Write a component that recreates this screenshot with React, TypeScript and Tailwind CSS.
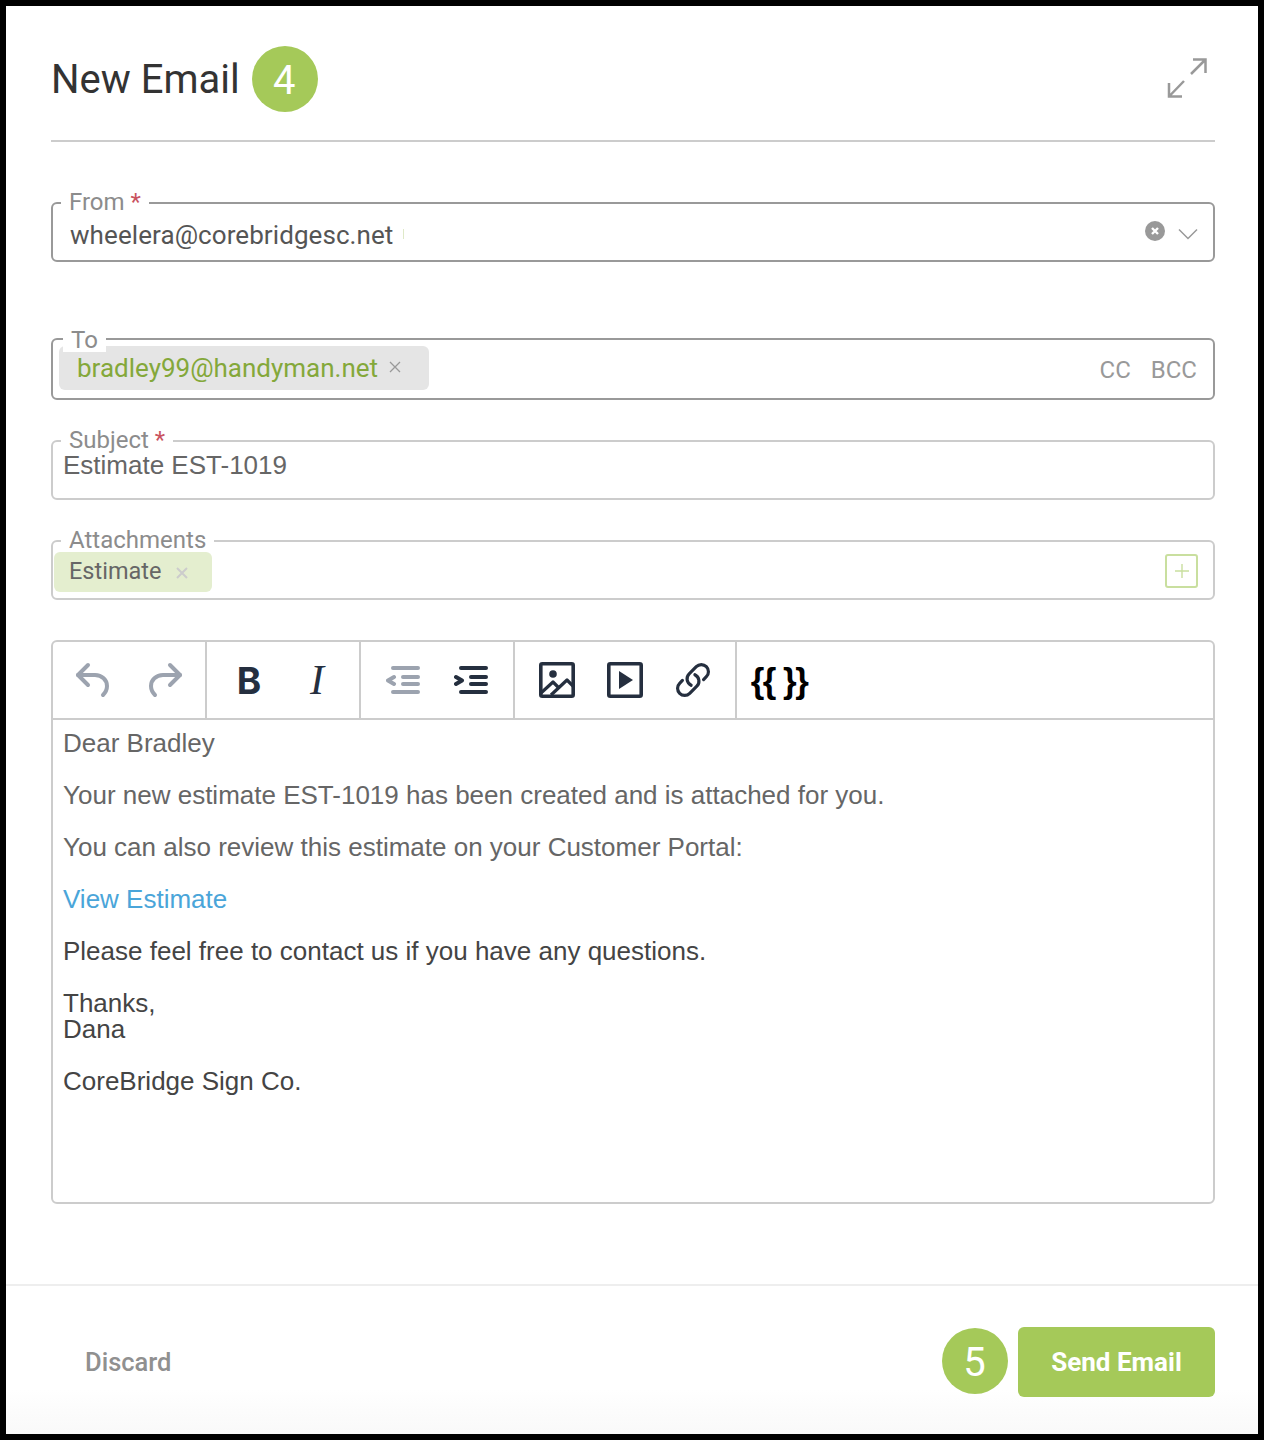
import React from "react";

const roboto = "font-['Roboto',sans-serif]";
const arial = "font-['Liberation_Sans',Arial,sans-serif]";

function Badge({ n }: { n: string }) {
  return (
    <span className={`flex h-[66px] w-[66px] shrink-0 items-center justify-center rounded-full bg-[#a5c959] pr-px pt-[3px] text-[40px] leading-none text-white ${roboto}`}>
      {n}
    </span>
  );
}

function Req() {
  return <span className="ml-[6px] text-[#c9535f]">*</span>;
}

function FieldLabel({ children, className = "" }: { children: React.ReactNode; className?: string }) {
  return (
    <span className={`absolute z-10 bg-white text-[24px] leading-[24px] text-[#8c8c8c] ${roboto} ${className}`}>
      {children}
    </span>
  );
}

function Undo({ flip = false, color }: { flip?: boolean; color: string }) {
  return (
    <svg width="36" height="36" viewBox="0 0 36 36" fill="none" stroke={color} strokeWidth="4" strokeLinecap="round" strokeLinejoin="round" className={flip ? "-scale-x-100" : ""}>
      <path d="M13 3 3 13l10 10" />
      <path d="M3 13h17c7 0 12 5 12 11 0 3-1 6-4 9" />
    </svg>
  );
}

function Outdent({ color, flip = false }: { color: string; flip?: boolean }) {
  return (
    <svg width="34" height="30" viewBox="0 0 34 30" fill="none" stroke={color} strokeWidth="4" strokeLinecap="round" strokeLinejoin="round">
      <path d="M7 3h25M17 12h15M17 19h15M7 27h25" />
      {flip ? <path d="M2 12l6 3.500-6 3.500" /> : <path d="M8 12l-6 3.500 6 3.500" />}
    </svg>
  );
}

function Btn({ children }: { children: React.ReactNode }) {
  return <span className="flex h-full w-[68px] items-center justify-center">{children}</span>;
}

function Group({ children, last = false }: { children: React.ReactNode; last?: boolean }) {
  return <div className={`flex h-full px-2 ${last ? "" : "border-r-2 border-[#cccccc]"}`}>{children}</div>;
}

export default function App() {
  return (
    <div className="box-border flex h-[1440px] w-[1264px] flex-col border-[6px] border-black bg-white">
      <div className="flex flex-1 flex-col pl-[45px] pr-[43px]">
        <header className="flex items-center justify-between border-b-2 border-[#cccccc] pb-[28px] pt-[40px]">
          <div className="flex items-center gap-[12px]">
            <h1 className={`pt-[2px] text-[40px] font-normal leading-none text-[#333333] ${roboto}`}>New Email</h1>
            <Badge n="4" />
          </div>
          <svg width="42" height="42" viewBox="0 0 42 42" fill="none" stroke="#999999" strokeWidth="2.500" className="mr-[7px]">
            <path d="M25 16 39.500 1.500M27 1.500h12.500V15" />
            <path d="M18 23 3 38.500M3 25v13.500h13" />
          </svg>
        </header>

        <div className="relative mt-[60px] flex h-[60px] items-center rounded-[6px] border-2 border-[#999999] pl-[17px] pr-[15px]">
          <FieldLabel className="left-[8px] top-[-14px] px-[8px]">From<Req /></FieldLabel>
          <span className={`mt-[5px] text-[26px] leading-[30px] tracking-[0.08px] text-[#555555] ${roboto}`}>wheelera@corebridgesc.net</span>
          <span className="ml-[10px] mt-[4px] h-[10px] w-px bg-[#dfe9c8]" />
          <svg width="20" height="20" viewBox="0 0 20 20" className="ml-auto mt-[-2px]">
            <circle cx="10" cy="10" r="10" fill="#999999" />
            <path d="M7 7l6 6M13 7l-6 6" stroke="#fff" strokeWidth="2.400" />
          </svg>
          <svg width="20" height="12" viewBox="0 0 20 12" fill="none" stroke="#999999" strokeWidth="1.500" className="ml-[13px] mt-[4px]">
            <path d="M1 1.500l9 9 9-9" />
          </svg>
        </div>

        <div className="relative mt-[76px] flex h-[62px] items-start rounded-[6px] border-2 border-[#999999] pl-[6px] pr-[16px] pt-[6px]">
          <FieldLabel className="left-[10px] top-[-12px] px-[8px]">To</FieldLabel>
          <span className="flex h-[44px] w-[370px] items-center rounded-[6px] bg-[#e5e5e5] pl-[18px]">
            <span className={`text-[26px] leading-[30px] text-[#84a83a] ${roboto}`}>bradley99@handyman.net</span>
            <svg width="12" height="12" viewBox="0 0 12 12" stroke="#999999" strokeWidth="1.300" className="ml-[11px] mt-[-2px]">
              <path d="M1 1l10 10M11 1 1 11" />
            </svg>
          </span>
          <div className={`ml-auto mt-[9px] flex gap-[20px] text-[24px] leading-[30px] text-[#999999] ${roboto}`}>
            <span>CC</span>
            <span>BCC</span>
          </div>
        </div>

        <div className="relative mt-[40px] h-[60px] rounded-[6px] border-2 border-[#cccccc] pl-[10px] pt-[10px]">
          <FieldLabel className="left-[8px] top-[-14px] px-[8px]">Subject<Req /></FieldLabel>
          <span className={`block text-[26px] leading-[26px] text-[#666666] ${arial}`}>Estimate EST-1019</span>
        </div>

        <div className="relative mt-[40px] flex h-[60px] items-start rounded-[6px] border-2 border-[#cccccc] pl-px pr-[15px] pt-[10px]">
          <FieldLabel className="left-[8px] top-[-14px] px-[8px]">Attachments</FieldLabel>
          <span className="flex h-[40px] w-[158px] items-center rounded-[6px] bg-[#e4eecf] pl-[15px]">
            <span className={`mt-[-3px] text-[23.500px] leading-[30px] text-[#666666] ${roboto}`}>Estimate</span>
            <svg width="12" height="12" viewBox="0 0 12 12" stroke="#cccccc" strokeWidth="2" className="ml-[15px] mt-[1px]">
              <path d="M1 1l10 10M11 1 1 11" />
            </svg>
          </span>
          <span className="ml-auto mt-[2px] flex h-[34px] w-[33px] items-center justify-center rounded-[3px] border-2 border-[#c9df9f]">
            <svg width="14" height="14" viewBox="0 0 14 14" stroke="#c9df9f" strokeWidth="1.400">
              <path d="M7 0v14M0 7h14" />
            </svg>
          </span>
        </div>

        <div className="mt-[40px] flex h-[564px] flex-col rounded-[6px] border-2 border-[#cccccc]">
          <div className="flex h-[78px] shrink-0 items-stretch border-b-2 border-[#cccccc]">
            <Group>
              <Btn><span className="mr-[4px]"><Undo color="#9ca3af" /></span></Btn>
              <Btn><span className="ml-[4px]"><Undo flip color="#9ca3af" /></span></Btn>
            </Group>
            <Group>
              <Btn><span className="font-['Inter',sans-serif] text-[37px] font-bold leading-none text-[#252f3f]">B</span></Btn>
              <Btn><span className="font-['Liberation_Serif',serif] text-[42px] italic leading-none text-[#252f3f]">I</span></Btn>
            </Group>
            <Group>
              <Btn><Outdent color="#9ca3af" /></Btn>
              <Btn><Outdent flip color="#252f3f" /></Btn>
            </Group>
            <Group>
              <Btn>
                <svg width="36" height="36" viewBox="0 0 36 36" fill="none" stroke="#252f3f" strokeWidth="3.600" strokeLinejoin="round">
                  <rect x="1.800" y="1.800" width="32.400" height="32.400" rx="1.500" />
                  <circle cx="14" cy="12" r="3.800" fill="#252f3f" stroke="none" />
                  <path d="M2 31l12-11 5 5M12 33l16-15 7 7" strokeWidth="3.200" />
                </svg>
              </Btn>
              <Btn>
                <svg width="36" height="36" viewBox="0 0 36 36" fill="none" stroke="#252f3f" strokeWidth="3.600" strokeLinejoin="round">
                  <rect x="1.800" y="1.800" width="32.400" height="32.400" rx="1.500" />
                  <path d="M12 9l14 9-14 9z" fill="#252f3f" stroke="none" />
                </svg>
              </Btn>
              <Btn>
                <svg width="38" height="38" viewBox="0 0 24 24" fill="none" stroke="#252f3f" strokeWidth="2" strokeLinecap="round" strokeLinejoin="round">
                  <path d="M13.190 8.688a4.500 4.500 0 0 1 1.242 7.244l-4.500 4.500a4.500 4.500 0 0 1-6.364-6.364l1.757-1.757m13.350-.622 1.757-1.757a4.500 4.500 0 0 0-6.364-6.364l-4.500 4.500a4.500 4.500 0 0 0 1.242 7.244" />
                </svg>
              </Btn>
            </Group>
            <Group last>
              <Btn><span className={`whitespace-nowrap text-[35px] font-bold leading-none tracking-[-1.500px] text-black ${arial}`}>{"{{ }}"}</span></Btn>
            </Group>
          </div>
          <div className={`px-[10px] pt-[10px] text-[26px] leading-[26px] text-[#666666] ${arial}`}>
            <p>Dear Bradley</p>
            <p className="mt-[26px]">Your new estimate EST-1019 has been created and is attached for you.</p>
            <p className="mt-[26px]">You can also review this estimate on your Customer Portal:</p>
            <p className="mt-[26px] text-[#4aa5d9]">View Estimate</p>
            <div className="text-[#444444]">
              <p className="mt-[26px]">Please feel free to contact us if you have any questions.</p>
              <p className="mt-[26px]">Thanks,<br />Dana</p>
              <p className="mt-[26px]">CoreBridge Sign Co.</p>
            </div>
          </div>
        </div>
      </div>

      <footer className="flex h-[150px] shrink-0 items-start justify-between border-t-2 border-[#eeeeee] bg-gradient-to-b from-white from-70% to-[#f9f9f9] pl-[79px] pr-[43px] pt-[41px]">
        <span className={`mt-[16px] text-[25.500px] font-medium leading-[38px] text-[#909090] ${roboto}`}>Discard</span>
        <div className="flex items-start gap-[10px]">
          <span className="mt-px"><Badge n="5" /></span>
          <button className={`h-[70px] w-[197px] rounded-[6px] bg-[#a5c959] text-[26px] font-bold text-white ${roboto}`}>Send Email</button>
        </div>
      </footer>
    </div>
  );
}
